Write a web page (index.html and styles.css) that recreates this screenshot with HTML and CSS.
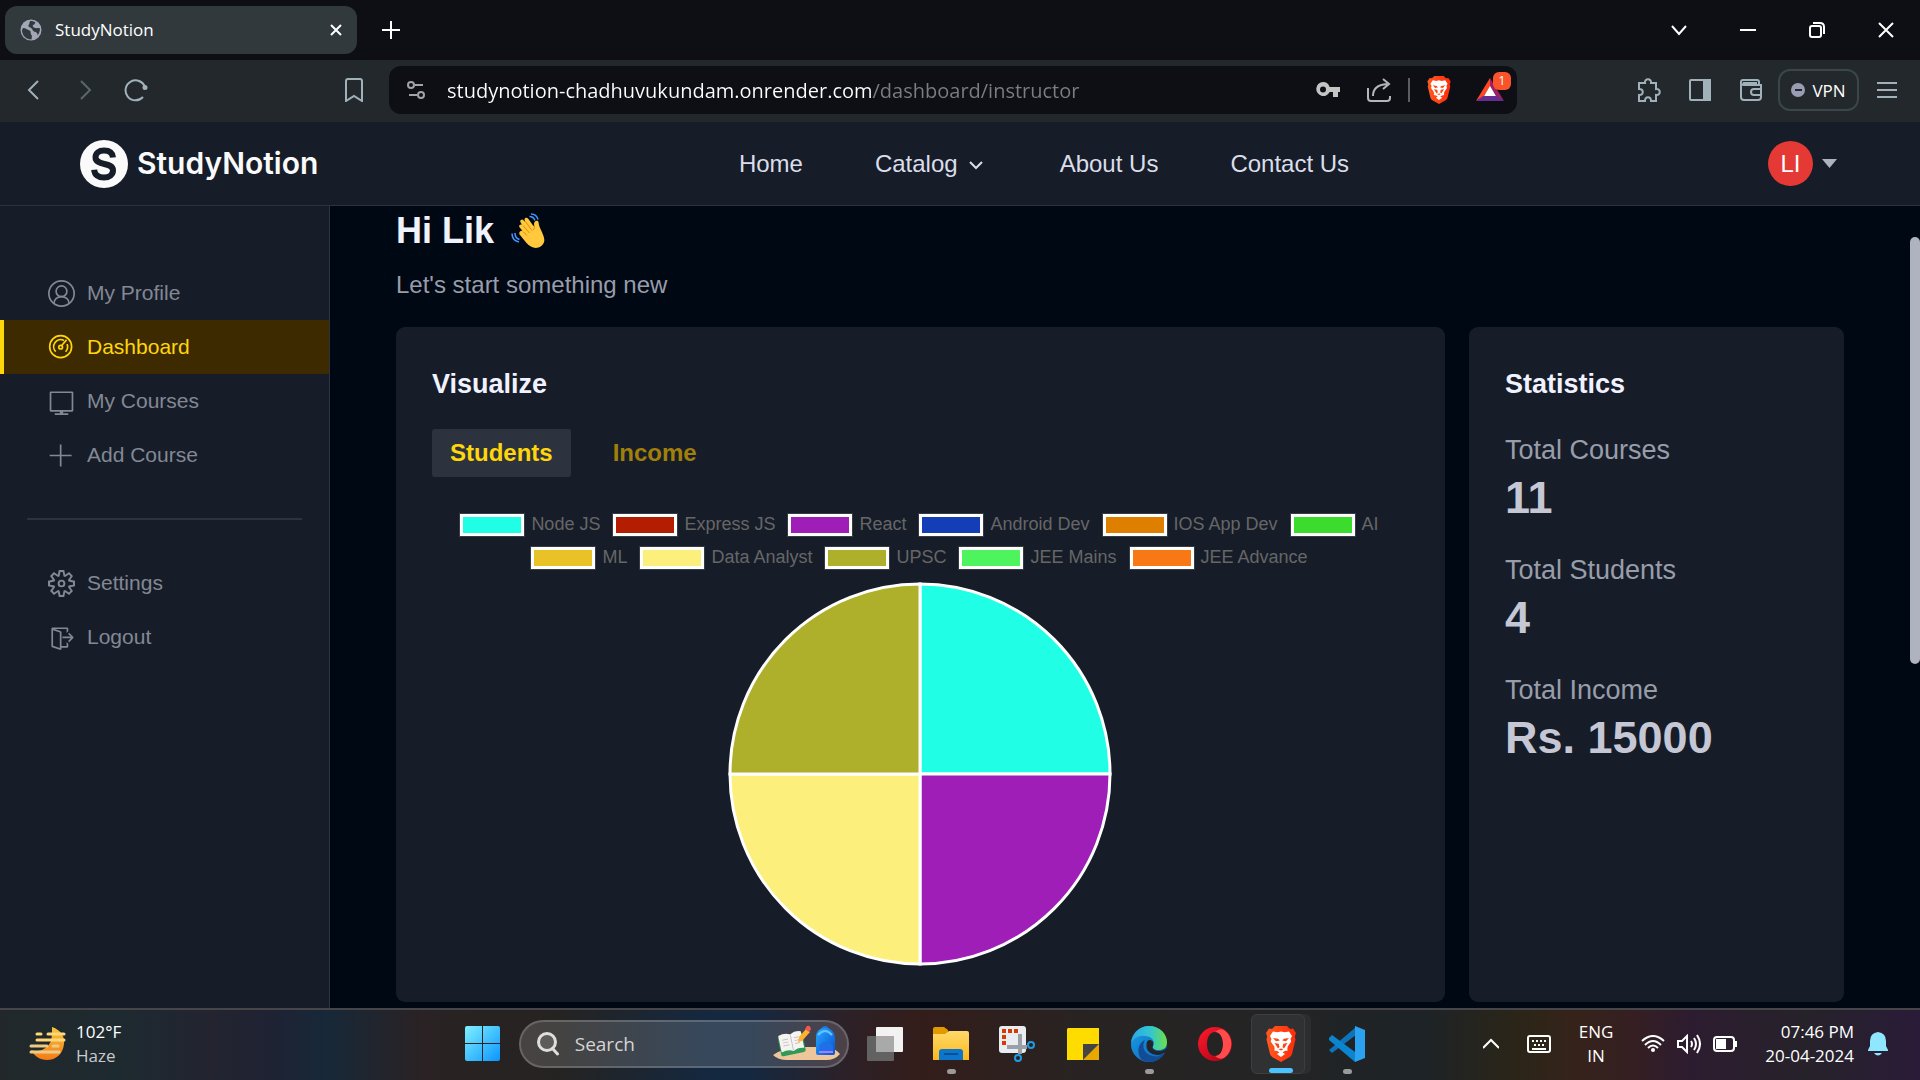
FILE: index.html
```html
<!DOCTYPE html>
<html lang="en">
<head>
<meta charset="utf-8">
<title>StudyNotion</title>
<link rel="stylesheet" href="styles.css">
</head>
<body>
<svg class="defs" aria-hidden="true">
  <defs>
    <linearGradient id="brave" x1="0" x2="1" y1="0" y2="0"><stop offset="0" stop-color="#ff5a1f"/><stop offset="1" stop-color="#ff2b0a"/></linearGradient>
    <linearGradient id="win" x1="0" y1="0" x2="1" y2="1"><stop offset="0" stop-color="#7ff0ff"/><stop offset="1" stop-color="#0a95ff"/></linearGradient>
    <linearGradient id="sun" x1="0" y1="0" x2="0" y2="1"><stop offset="0" stop-color="#f5c542"/><stop offset="1" stop-color="#f47b16"/></linearGradient>
    <linearGradient id="folder" x1="0" y1="0" x2="0" y2="1"><stop offset="0" stop-color="#ffd96b"/><stop offset="1" stop-color="#fcb91c"/></linearGradient>
    <linearGradient id="edgeTop" x1="0" y1="0" x2="1" y2="0"><stop offset="0" stop-color="#2ba6e8"/><stop offset=".55" stop-color="#34c6cf"/><stop offset="1" stop-color="#6be046"/></linearGradient>
    <linearGradient id="edgeBody" x1="0" y1="0" x2="1" y2="1"><stop offset="0" stop-color="#1b9de2"/><stop offset="1" stop-color="#0b62bd"/></linearGradient>
    <linearGradient id="opera" x1="0" y1="0" x2="1" y2="1"><stop offset="0" stop-color="#ff1b2d"/><stop offset="1" stop-color="#a70014"/></linearGradient>
    <linearGradient id="bag" x1="0" y1="0" x2="1" y2="1"><stop offset="0" stop-color="#28a8ff"/><stop offset="1" stop-color="#0a50d0"/></linearGradient>
    <symbol id="lion" viewBox="0 0 30 36">
      <path fill="url(#brave)" d="M9 0h12l3 3 3-.5 3 4.500-1.200 3.500.7 3-3.500 14.500q-.6 2-2.500 3.300L15 36l-8.500-4.700Q4.600 30 4 28L.5 13.500l.7-3L0 7l3-4.500L6 3z"/>
      <path fill="#fff" d="M15 5.500l3.500.8 4.500-.8 3 4.500-1.500 3 .8 2.500-3.600 5-.4 2.500 .5 1.500-3 .5-2.200 1.200 2.400 1.900L15 31l-4-2.900 2.400-1.900-2.200-1.200-3-.5.5-1.500-.4-2.500-3.600-5 .8-2.500L4 10l3-4.500 4.500.8z"/>
      <path fill="#fb4616" d="M7 12l5 .8 1.800 1.700-3.800.8zM23 12l-5 .8-1.800 1.700 3.800.8zM8.500 17l4.200.7.8 3.300-1.500 1.600zM21.500 17l-4.200.7-.8 3.300 1.500 1.600zM12.500 23.300l2.500-.8 2.500.8-2.500 1.200z"/>
    </symbol>
  </defs>
</svg>

<header class="browser">
  <div class="tabs">
    <div class="tab">
      <svg class="tab-icon" viewBox="0 0 22 22"><circle cx="11" cy="11" r="10.500" fill="#a4a6b5"/><path fill="#31393d" d="M3 9c3 0 4 1.500 6.500 2.500 2 .8.500 3 2 4.500 1 1 0 3 0 4.500C6 20.500 2 16.500 2 11zM10 2c2 0 4 .4 5.500 1.500-1 1-.5 2-2.500 2.500-1 1 .5 2.500 2 3 2 .5 3-.5 5 .5 0 3-1 5-2.500 7C18 14 16 13 14 12.500c-2-1-1-2.500-3-3.500C9 8 7.500 7 9 5.500z"/></svg>
      <span class="tab-title">StudyNotion</span>
      <button class="tab-close" aria-label="Close tab"><svg width="12" height="12" viewBox="0 0 12 12"><path d="M1 1l10 10M11 1L1 11" stroke="#fff" stroke-width="2" fill="none"/></svg></button>
    </div>
    <button class="new-tab" aria-label="New tab"><svg width="18" height="18" viewBox="0 0 18 18"><path d="M9 0v18M0 9h18" stroke="#fff" stroke-width="2"/></svg></button>
    <div class="window-buttons">
      <button aria-label="Search tabs"><svg width="16" height="16" viewBox="0 0 16 16"><path d="M1 4l7 8 7-8" stroke="#fff" stroke-width="2" fill="none"/></svg></button>
      <button aria-label="Minimize"><svg width="16" height="16" viewBox="0 0 16 16"><path d="M0 8h16" stroke="#fff" stroke-width="2"/></svg></button>
      <button aria-label="Restore"><svg width="16" height="16" viewBox="0 0 16 16"><g stroke="#fff" stroke-width="2" fill="none"><rect x="1" y="4" width="11" height="11" rx="2"/><path d="M4 1h7q4 0 4 4v7"/></g></svg></button>
      <button aria-label="Close"><svg width="16" height="16" viewBox="0 0 16 16"><path d="M1 1l14 14M15 1L1 15" stroke="#fff" stroke-width="2"/></svg></button>
    </div>
  </div>
  <div class="toolbar">
    <div class="toolbar-left">
      <button aria-label="Back"><svg width="24" height="24" viewBox="0 0 24 24"><path d="M16 3l-9 9 9 9"/></svg></button>
      <button class="dim" aria-label="Forward"><svg width="24" height="24" viewBox="0 0 24 24"><path d="M8 3l9 9-9 9"/></svg></button>
      <button aria-label="Reload"><svg width="24" height="24" viewBox="0 0 24 24"><path d="M21 9A10 10 0 1 0 19 19"/><circle cx="21" cy="9.500" r="2.500" fill="#a0b1ba" stroke="none"/></svg></button>
      <button class="bookmark" aria-label="Bookmark"><svg width="24" height="24" viewBox="0 0 24 24"><path d="M6 1h12q2 0 2 2v20l-8-5-8 5V3q0-2 2-2z"/></svg></button>
    </div>
    <div class="address">
      <button class="site-info" aria-label="Site information"><svg width="20" height="20" viewBox="0 0 20 20" fill="none" stroke="#a0a3a8" stroke-width="2"><circle cx="5" cy="5" r="3"/><path d="M9 5h8M3 15h8"/><circle cx="15" cy="15" r="3"/></svg></button>
      <input class="url" type="text" aria-label="Address" value="studynotion-chadhuvukundam.onrender.com/dashboard/instructor">
      <button aria-label="Passwords"><svg width="24" height="16" viewBox="0 0 24 16"><path fill="#c4c4c4" fill-rule="evenodd" d="M7 0a7 7 0 0 1 6.600 5H24v5h-2v5h-5v-5h-3.400A7 7 0 1 1 7 0zm0 4.500a3 3 0 1 0 0 6 3 3 0 0 0 0-6z"/></svg></button>
      <button aria-label="Share"><svg width="24" height="24" viewBox="0 0 24 24" fill="none" stroke="#b4b6b8" stroke-width="2"><path d="M1 10v10q0 3 3 3h16q3 0 3-3v-2M6 18q0-11 14-12M16 1l6 5-6 5"/></svg></button>
      <span class="address-divider"></span>
      <button aria-label="Brave Shields"><svg width="24" height="28"><use href="#lion"/></svg></button>
      <button class="rewards" aria-label="Brave Rewards"><svg width="28" height="24" viewBox="0 0 28 24"><path fill="#ff4724" d="M14 0v9L7 19 0 23z"/><path fill="#9e1f63" d="M14 0l14 23-7-4-7-10z"/><path fill="#662d91" d="M0 23l7-5h14l7 5z"/><path fill="#fff" d="M14 8l6 10H8z"/></svg><span class="badge">1</span></button>
    </div>
    <div class="toolbar-right">
      <button aria-label="Extensions"><svg width="24" height="24" viewBox="0 0 24 24"><path d="M2 5h6c-1-5 7-5 6 0h5v6c5-1 5 7 0 6v6h-5c0-5-6-5-6 0H2v-6c5 0 5-6 0-6z"/></svg></button>
      <button aria-label="Sidebar"><svg width="24" height="24" viewBox="0 0 24 24"><rect x="2" y="2" width="20" height="20" rx="1"/><path fill="#a0b1ba" d="M16 2h6v20h-6z"/></svg></button>
      <button aria-label="Wallet"><svg width="24" height="24" viewBox="0 0 24 24"><path d="M20 7V4q0-2-2-2H4Q2 2 2 4v15q0 3 3 3h14q3 0 3-3V7H5Q2 7 2 4M22 11h-7q-3 0-3 3t3 3h7M4 5h14"/></svg></button>
      <button class="vpn"><svg width="15" height="15" viewBox="0 0 15 15"><circle cx="7" cy="7" r="7" fill="#9a9cb4" stroke="none"/><path d="M4 7h7" stroke="#22282b"/></svg>VPN</button>
      <button aria-label="Menu"><svg width="20" height="16" viewBox="0 0 20 16"><path d="M0 1h20M0 8h20M0 15h20"/></svg></button>
    </div>
  </div>
</header>

<div class="page">
  <nav class="site-nav">
    <a class="logo" href="#"><svg width="48" height="48" viewBox="0 0 48 48"><circle cx="24" cy="24" r="24" fill="#fafafa"/><path d="M33 17.500C32.500 12.500 29 10.500 24 10.500c-5 0-8.500 2.500-8.500 6.800 0 9.200 17.500 4.200 17.500 13 0 4.500-3.800 7.200-9 7.200-5.500 0-9.500-2.700-9.800-7.800" fill="none" stroke="#161d29" stroke-width="6"/></svg><span>StudyNotion</span></a>
    <ul class="nav-links">
      <li><a href="#">Home</a></li>
      <li><a href="#">Catalog <svg width="24" height="24" viewBox="0 0 24 24"><path d="M6 10l6 6 6-6" fill="none" stroke="#dbddea" stroke-width="2"/></svg></a></li>
      <li><a href="#">About Us</a></li>
      <li><a href="#">Contact Us</a></li>
    </ul>
    <button class="account"><span class="avatar">LI</span><svg width="21" height="21" viewBox="0 0 21 21"><path fill="#afb2bf" d="M3 6h15l-7.500 9z"/></svg></button>
  </nav>

  <div class="shell">
    <aside class="sidebar">
      <ul>
        <li><a href="#"><svg viewBox="0 0 16 16"><g fill="none" stroke="currentColor"><circle cx="8" cy="8" r="7.500"/><circle cx="8" cy="6.700" r="3.200"/><path d="M3.500 14c0-5.500 9-5.500 9 0"/></g></svg>My Profile</a></li>
        <li><a class="active" href="#"><svg viewBox="0 0 16 16"><g fill="none" stroke="currentColor"><circle cx="7.500" cy="7.500" r="6.500"/><path d="M4.600 10.500A4.200 4.200 0 0 1 9.500 3.800M11.300 6a4.200 4.200 0 0 1-.9 4.500M8 7l3-3.500"/><circle cx="7.500" cy="7.800" r="1.100"/></g></svg>Dashboard</a></li>
        <li><a href="#"><svg viewBox="0 0 16 16"><path fill="currentColor" fill-rule="evenodd" d="M14.500 2h-13l-.5.500v11l.5.500H7v1H4v1h8v-1H9v-1h5.500l.5-.5v-11zM14 13H2V3h12z"/></svg>My Courses</a></li>
        <li><a href="#"><svg viewBox="0 0 16 16"><path fill="currentColor" d="M14 7v1H8v6H7V8H1V7h6V1h1v6z" transform="translate(0 .5)"/></svg>Add Course</a></li>
      </ul>
      <hr>
      <ul>
        <li><a href="#"><svg viewBox="0 0 24 24"><path fill="currentColor" fill-rule="evenodd" d="M19.850 8.750l4.150.83v4.840l-4.150.83 2.350 3.520-3.430 3.430-3.520-2.350-.83 4.150H9.580l-.83-4.150-3.520 2.350-3.430-3.430 2.350-3.520L0 14.420V9.580l4.150-.83L1.800 5.230 5.230 1.800l3.520 2.350L9.580 0h4.840l.83 4.150 3.520-2.350 3.430 3.430-2.350 3.520zm-1.570 5.070l4-.81v-2l-4-.81-.54-1.300 2.290-3.430-1.430-1.430-3.430 2.290-1.300-.54-.81-4h-2l-.81 4-1.300.54-3.430-2.290-1.430 1.430L6.380 8.900l-.54 1.300-4 .81v2l4 .81.54 1.300-2.290 3.430 1.430 1.430 3.430-2.290 1.300.54.81 4h2l.81-4 1.300-.54 3.430 2.290 1.430-1.430-2.290-3.430.54-1.300zM12 8.570a3.430 3.430 0 1 1 0 6.860 3.430 3.430 0 0 1 0-6.860zm0 1.720a1.710 1.710 0 1 0 0 3.420 1.710 1.710 0 0 0 0-3.420z"/></svg>Settings</a></li>
        <li><a href="#"><svg viewBox="0 0 16 16"><path fill="currentColor" fill-rule="evenodd" d="M11.020 3.770v1.560l1-.99V2.500l-.5-.5h-9l-.51.500v.493L2 3v10.290l.36.460 5 1.720L8 15v-1h3.520l.5-.5v-1.810l-1-1V13H8V4.710l-.33-.46L4.036 3h6.984v.77zM7 14.280l-4-1.340V3.720l4 1.340v9.220zm6.520-5.800H8.550v-1h4.930l-1.600-1.600.71-.7 2.470 2.460v.71l-2.490 2.480-.7-.7 1.650-1.650z"/></svg>Logout</a></li>
      </ul>
    </aside>

    <main>
      <h1>Hi Lik <svg width="36" height="36" viewBox="0 0 36 36"><path fill="#ffc83d" d="M9 18.500c1.500-1.500 3 0 3 0l-3.500-4.200c-1.300-2 1.200-3.700 2.600-2.300L9.500 9.200c-1-2 1.400-3.700 3-2L14.200 9 13.600 7c-.5-2.400 2.400-3.200 3.600-1.200L22.500 13l.8-.3c-.6-2-.1-4.700 2-5 2.500-.4 2.300 2.200 2.800 4.500 1.300 5.800 9.800 15.300 1.900 21-5 3.500-10.500 1.200-14.500-3.200L9 22c-1-1-1-2.500 0-3.500z"/><path fill="none" stroke="#e08f00" stroke-width="1" d="M12 18.500l4 4M12 12.500l6.500 7.500M14.500 8.500l6.500 9M23.300 12.700c.2 2-.1 3.300-1.300 4.500"/><path fill="none" stroke="#4497fb" stroke-width="1.500" d="M18.500 3.500q4 0 5.500 4M20 1q5.500 0 7 5.500M4 20q0 5 4.500 6.500M1 20.500q0 7 7 8.500"/></svg></h1>
      <p class="subtitle">Let's start something new</p>
      <div class="cards">
        <section class="card">
          <h2>Visualize</h2>
          <div class="chart-tabs">
            <button class="selected">Students</button>
            <button>Income</button>
          </div>
          <div class="chart">
            <ul class="legend">
              <li><i class="c-node"></i><span>Node JS</span></li>
              <li><i class="c-express"></i><span>Express JS</span></li>
              <li><i class="c-react"></i><span>React</span></li>
              <li><i class="c-android"></i><span>Android Dev</span></li>
              <li><i class="c-ios"></i><span>IOS App Dev</span></li>
              <li><i class="c-ai"></i><span>AI</span></li>
              <li><i class="c-ml"></i><span>ML</span></li>
              <li><i class="c-data"></i><span>Data Analyst</span></li>
              <li><i class="c-upsc"></i><span>UPSC</span></li>
              <li><i class="c-mains"></i><span>JEE Mains</span></li>
              <li><i class="c-advance"></i><span>JEE Advance</span></li>
            </ul>
            <svg class="pie" viewBox="0 0 384 384" role="img" aria-label="Students per course">
              <g stroke="#fff" stroke-width="3">
                <path fill="#20ffe5" d="M192 192V2a190 190 0 0 1 190 190z"/>
                <path fill="#9f1eb7" d="M192 192h190a190 190 0 0 1-190 190z"/>
                <path fill="#fcef7b" d="M192 192v190A190 190 0 0 1 2 192z"/>
                <path fill="#aeaf2b" d="M192 192H2A190 190 0 0 1 192 2z"/>
              </g>
            </svg>
          </div>
        </section>
        <section class="card">
          <h2>Statistics</h2>
          <dl class="stats">
            <div><dt>Total Courses</dt><dd>11</dd></div>
            <div><dt>Total Students</dt><dd>4</dd></div>
            <div><dt>Total Income</dt><dd>Rs. 15000</dd></div>
          </dl>
        </section>
      </div>
    </main>
    <div class="scroll-track"><div class="scroll-thumb"></div></div>
  </div>
</div>

<footer class="taskbar">
  <button class="weather">
    <svg width="38" height="36" viewBox="0 0 38 36"><path fill="url(#sun)" d="M24 1C33 4 37 11 36 18 35 28 28 34 19 34 12 34 6 30 3 24c9 3 17-2 20-9 1-5 1-9 1-14z"/><g stroke-width="3" stroke-linecap="round" stroke="#ffd875"><path d="M9 8h4M20 8h16M9 14h27"/><path stroke="#eccb85" d="M3 20h16M25 20h5M3 26h28"/></g></svg>
    <span>102°F<br><span class="muted">Haze</span></span>
  </button>
  <div class="apps">
    <button aria-label="Start"><svg width="36" height="36" viewBox="0 0 36 36"><path fill="url(#win)" d="M2 0h15v17H0V2q0-2 2-2zM18 0h15q2 0 2 2v15H18zM0 18h17v17H2q-2 0-2-2zM18 18h17v15q0 2-2 2H18z"/></svg></button>
    <label class="search">
      <svg width="22" height="24" viewBox="0 0 22 24"><circle cx="10" cy="10" r="8.500" fill="#ffffff22" stroke="#dedede" stroke-width="3"/><path d="M15.500 16.500l5 5.500" stroke="#dedede" stroke-width="3" stroke-linecap="round"/></svg>
      <input type="search" placeholder="Search" aria-label="Search">
      <svg width="68" height="38" viewBox="0 0 68 38"><path fill="#edc79a" d="M0 30q10-7 25-8h30q8 2 12 7-5 6-14 6H14Q5 35 0 30z"/><g transform="rotate(-12 20 18)"><rect x="6" y="9" width="25" height="20" rx="2" fill="#2f9a58"/><path fill="#f7f4ef" d="M7 8q7-2 12 1 5-3 11-1v17q-6-2-11 1-5-3-12-1z"/><path d="M19 10v15M10 13h6M10 16h6M10 19h6M22 13h5M22 16h5M22 19h5" stroke="#c4c0cf"/></g><path fill="#ffb02e" d="M25 17l1-5 7-8 4 3-8 9z"/><path fill="#f8574f" d="M32 4l2-3q3-1 4 3l-2 3z"/><path d="M48 5q4-6 8 0" fill="none" stroke="#2274e0" stroke-width="2"/><path fill="url(#bag)" d="M43 13q0-10 9-10t10 10v15q0 2-2 2H45q-2 0-2-2z"/><path d="M45 10q7-8 14 0" fill="none" stroke="#5cc8ff" stroke-width="2"/><path fill="#1e6fe8" d="M46 24q0-7 7-7t7 7v3H46z"/><path d="M46 27h14" stroke="#a87cff" stroke-width="2"/></svg>
    </label>
    <button aria-label="Task view"><svg width="36" height="36" viewBox="0 0 36 36"><rect x="9" y="1" width="27" height="25" rx="1" fill="#f2f2f2"/><rect y="10" width="27" height="25" rx="1" fill="#626262"/><path fill="#a9a9a9" d="M9 10h18v16H9z"/></svg></button>
    <button class="running" aria-label="File Explorer"><svg width="36" height="36" viewBox="0 0 36 36"><path fill="#e09a00" d="M0 3q0-2 2-2h9l4 3v5H0z"/><path fill="url(#folder)" d="M0 8h12l4-3h18q2 0 2 2v27H0z"/><path fill="#0b76cc" d="M6 34V26q0-3 3-3h18q3 0 3 3v8z"/><path d="M11 28h14" stroke="#0a4f91" stroke-width="2"/></svg></button>
    <button aria-label="Snipping Tool"><svg width="36" height="36" viewBox="0 0 36 36"><rect width="27" height="27" rx="3" fill="#e9edf2"/><path fill="#d83b01" d="M3 3h4v4H3zM9 3h4v4H9zM15 3h4v4h-4zM3 9h4v4H3zM3 15h4v4H3z"/><path fill="none" stroke="#9aa0a6" stroke-width="4" d="M21 8v20M8 21h20"/><g fill="none" stroke="#1f9be6" stroke-width="2"><circle cx="32" cy="19" r="3"/><circle cx="19" cy="32" r="3"/></g></svg></button>
    <button aria-label="Sticky Notes"><svg width="32" height="32" viewBox="0 0 32 32"><path fill="#ffdc00" d="M1 0h31v32H0V1z"/><path fill="#e9a800" d="M16 32h16V16z"/><path fill="#444" d="M16 16h16L16 32z"/></svg></button>
    <button class="running" aria-label="Edge"><svg width="36" height="36" viewBox="0 0 36 36"><circle cx="18" cy="18" r="18" fill="url(#edgeBody)"/><path fill="url(#edgeTop)" d="M0 17C1 7 9 0 18 0c11 0 18 8 18 16 0 6-4 8-8 8-5 0-7-2-6-4 3-6-3-10-8-10C8 9 3 12 0 17z"/><path fill="#124c93" d="M14 14c-4 7 0 15 8 16 4 1 8 0 11-3-4 9-14 11-22 7C5 27 7 17 14 14z"/><path fill="#22252a" d="M18 14c5 0 5 4 3.500 7 0 2 2.500 4 7 4 3 0 5-1 8-4v5q-2 1-4 1c-2 2-5 2-7 2-6-1-10-4-10-9 0-3 0-5 2.500-6z"/></svg></button>
    <button aria-label="Opera"><svg width="36" height="36" viewBox="0 0 36 36"><path fill="url(#opera)" fill-rule="evenodd" d="M18 1a17 17 0 1 1 0 34 17 17 0 0 1 0-34zm0 5c-5 0-8 5-8 12s3 12 8 12 8-5 8-12-3-12-8-12z"/><path fill="#ff4b4b" d="M18 30c5 0 8-5 8-12S23 6 18 6q4-4 9-2a17 17 0 0 1 0 28q-5 2-9-2z"/></svg></button>
    <button class="running current" aria-label="Brave"><svg width="30" height="36"><use href="#lion"/></svg></button>
    <button class="running" aria-label="Visual Studio Code"><svg width="36" height="36" viewBox="0 0 36 36"><path fill="#0e73b9" d="M0 24l3 3 24-18V1L0 24z"/><path fill="#0b85d0" d="M3 9l-3 3 0 2 26 22V26z"/><path fill="#2aa2f0" d="M26 0l10 4v28l-10 4z"/></svg></button>
  </div>
  <div class="tray">
    <button class="tray-more" aria-label="Show hidden icons"><svg width="16" height="16" viewBox="0 0 16 16"><path d="M0 12l8-8 8 8"/></svg></button>
    <button class="tray-keyboard" aria-label="Touch keyboard"><svg width="24" height="18" viewBox="0 0 24 18"><rect x="1" y="1" width="22" height="16" rx="2"/><path d="M5 6h14M7 10h10" stroke-dasharray="2 2"/><path d="M5 14h14"/></svg></button>
    <button class="tray-language">ENG<br>IN</button>
    <button class="tray-status" aria-label="Network, volume and battery">
      <svg width="24" height="18" viewBox="0 0 24 18"><path d="M1 6q11-10 22 0M4 10q8-8 16 0M7 13q5-5 10 0"/><circle cx="12" cy="15" r="2" fill="#fff" stroke="none"/></svg>
      <svg width="24" height="20" viewBox="0 0 24 20"><path d="M1 7h4l5-5v16l-5-5H1zM14 7q2 3 0 6M17 4q4 6 0 12M20 1q6 9 0 18"/></svg>
      <svg width="24" height="18" viewBox="0 0 24 18"><rect x="1" y="2" width="20" height="14" rx="3"/><path fill="#fff" stroke="none" d="M3 4h10v10H3zM22 6h2v6h-2z"/></svg>
    </button>
    <button class="tray-clock">07:46 PM<br>20-04-2024</button>
    <button aria-label="Notifications"><svg width="20" height="24" viewBox="0 0 20 24"><path fill="#8fe6ff" stroke="none" d="M10 0q8 1 8 9v5l2 4v1H0v-1l2-4V9q0-8 8-9zM6 21h8q-4 5-8 0z"/></svg></button>
  </div>
</footer>
</body>
</html>
```

FILE: styles.css
```css
* { box-sizing: border-box; }

body {
  margin: 0;
  height: 100vh;
  display: flex;
  flex-direction: column;
  overflow: hidden;
  background: #000814;
  font-family: "Liberation Sans", Arial, sans-serif;
}

button {
  margin: 0;
  padding: 0;
  border: 0;
  background: none;
  color: inherit;
  font: inherit;
  display: flex;
  align-items: center;
  justify-content: center;
}

input { border: 0; padding: 0; background: none; font: inherit; outline: 0; min-width: 0; }
ul, dl, dd, h1, h2, p { margin: 0; padding: 0; }
ul { list-style: none; }
a { color: inherit; text-decoration: none; }
svg { flex: none; }
.defs { position: absolute; width: 0; height: 0; }

/* Browser window */
.browser { flex: none; font-family: "Open Sans", "Noto Sans", sans-serif; color: #fff; }
.tabs { display: flex; align-items: center; height: 60px; padding-left: 5px; background: #0e0f14; }
.tab { display: flex; align-items: center; width: 352px; height: 48px; padding: 0 15px; border-radius: 12px; background: #31393d; font-size: 17px; }
.tab-icon { width: 22px; height: 26px; margin-right: 13px; }
.tab-title { padding-bottom: 2px; }
.tab-close { margin-left: auto; }
.new-tab { width: 50px; height: 48px; margin-left: 9px; }
.window-buttons { display: flex; margin-left: auto; }
.window-buttons button { width: 69px; height: 60px; }

.toolbar { display: flex; height: 62px; padding: 6px 8px 8px; background: #22282b; }
.toolbar button { width: 51px; height: 48px; }
.toolbar-left, .toolbar-right { display: flex; align-items: center; flex: none; }
.toolbar-left { width: 381px; padding-right: 10px; }
.toolbar-left svg, .toolbar-right svg { fill: none; stroke: #a0b1ba; stroke-width: 2; }
.toolbar-left .dim { opacity: .45; }
.toolbar-left .bookmark { margin-left: auto; }
.address { flex: 1; display: flex; align-items: center; padding: 0 2px 0 12px; border-radius: 12px; background: #0e0f14; }
.address .site-info { width: 30px; margin-right: 16px; }
.url {
  flex: 1;
  height: 48px;
  font-size: 20px;
  color: transparent;
  background: linear-gradient(90deg, #fff 425px, #7c7d80 425px);
  background-clip: text;
  -webkit-background-clip: text;
}
.address-divider { width: 2px; height: 24px; margin: 0 3px 0 4px; background: #5b5d62; }
.rewards { position: relative; }
.badge { position: absolute; top: 6px; right: 4px; width: 18px; height: 18px; border-radius: 6px; background: #fb542b; font-size: 12px; line-height: 18px; }
.toolbar-right { margin-left: 106px; }
.toolbar-right .vpn { width: 81px; height: 42px; margin: 0 2px; gap: 6px; border: 2px solid #3a4649; border-radius: 12px; font-size: 17px; }

/* Site header */
.page { flex: 1; min-height: 0; display: flex; flex-direction: column; }
.site-nav { flex: none; display: flex; align-items: center; justify-content: space-between; height: 84px; padding: 0 80px; background: #161d29; border-bottom: 1px solid #2c333f; color: #dbddea; font-size: 24px; }
.logo { display: flex; align-items: center; gap: 9px; color: #fafafa; font-family: Inter, sans-serif; font-size: 30px; font-weight: 600; }
.logo span { min-width: 183px; padding-bottom: 2px; }
.nav-links { display: flex; gap: 72px; }
.nav-links a { display: flex; align-items: center; gap: 6px; }
.account { gap: 6px; }
.avatar { width: 45px; height: 45px; border-radius: 50%; background: #e53935; color: #fff; line-height: 45px; }

/* Dashboard */
.shell { flex: 1; min-height: 0; display: flex; }
.sidebar { flex: none; width: 330px; padding: 60px 0; background: #161d29; border-right: 1px solid #2c333f; }
.sidebar a { display: flex; align-items: center; gap: 12px; height: 54px; padding-left: 48px; color: #838894; font-size: 21px; }
.sidebar svg { width: 27px; height: 27px; }
.sidebar .active { padding-left: 44px; border-left: 4px solid #ffd60a; background: #3d2a01; color: #ffd60a; }
.sidebar hr { height: 2px; margin: 36px 27px; border: 0; background: #2c333f; }

main { flex: 1; min-width: 0; padding: 1px 66px 6px; display: flex; flex-direction: column; }
h1 { display: flex; align-items: center; gap: 17px; color: #f1f2ff; font-size: 36px; line-height: 48px; }
.subtitle { margin: 12px 0 24px; color: #999daa; font-size: 24px; line-height: 36px; }
.cards { flex: 1; min-height: 0; display: flex; gap: 24px; }
.card { width: 375px; padding: 36px; border-radius: 9px; background: #161d29; }
.card:first-child { flex: 1; width: auto; }
h2 { color: #f1f2ff; font-size: 27px; line-height: 42px; }
.chart-tabs { display: flex; gap: 24px; margin-top: 24px; font-size: 24px; font-weight: bold; }
.chart-tabs button { height: 48px; padding: 0 18px; border-radius: 3px; color: #a0800a; }
.chart-tabs .selected { background: #2c333f; color: #ffd60a; }

.chart { margin-top: 36px; padding-right: 2px; }
.legend { display: flex; flex-wrap: wrap; justify-content: center; gap: 9px 13px; color: #666; font-size: 18px; line-height: 22px; }
.legend li { display: flex; align-items: center; gap: 7px; height: 24px; }
.legend span { padding-bottom: 2px; }
.legend i { width: 64px; height: 22px; border: 3px solid #fff; outline: 1px solid #ffffff22; }
.c-node { background: #20ffe5; }
.c-express { background: #b31e03; }
.c-react { background: #9f1eb7; }
.c-android { background: #143db8; }
.c-ios { background: #df7f00; }
.c-ai { background: #3bdc2e; }
.c-ml { background: #e9c227; }
.c-data { background: #fcef7b; }
.c-upsc { background: #aeaf2b; }
.c-mains { background: #4df45d; }
.c-advance { background: #f97816; }
.pie { display: block; width: 384px; margin: 12px auto 0; }

.stats { display: flex; flex-direction: column; gap: 24px; margin-top: 24px; }
.stats dt { color: #999daa; font-size: 27px; line-height: 42px; }
.stats dd { color: #c5c7d4; font-size: 45px; font-weight: bold; line-height: 54px; }

.scroll-track { width: 10px; padding-top: 31px; }
.scroll-thumb { height: 427px; border-radius: 5px; background: #afb2bf; }

/* Taskbar */
.taskbar {
  flex: none;
  display: grid;
  grid-template-columns: 5fr auto 6fr;
  height: 72px;
  padding-bottom: 2px;
  border-top: 2px solid #45454a;
  background: linear-gradient(90deg, #22282a 0, #1d2a30 6%, #232430 11%, #1f2233 14%, #172838 17%, #2a2224 22%, #252321 29%, #142840 37%, #142840 39%, #2c2128 44%, #331d1a 48%, #282322 56%, #242424 65%, #1d2327 74%, #2b2518 79%, #35231a 82%, #351f22 85%, #2d1c30 88%, #26222a 94%, #2a1b38 100%);
  color: #fff;
  font-family: "Open Sans", "Noto Sans", sans-serif;
  font-size: 17px;
  line-height: 24px;
}
.weather { justify-self: start; gap: 10px; padding-left: 28px; text-align: left; }
.weather .muted { color: #c8cacc; }
.apps { display: flex; align-items: center; gap: 6px; }
.apps button { position: relative; width: 60px; height: 60px; border-radius: 6px; }
.apps .running::after { content: ""; position: absolute; bottom: 0; left: 26px; width: 9px; height: 5px; border-radius: 3px; background: #9a9a9a; }
.apps .current { width: 54px; margin-right: 6px; padding-left: 6px; background: #303133; border: 1px solid #3d3e40; box-shadow: 6px 0 0 #2c2d2f; }
.apps .current::after { left: 17px; width: 24px; background: #4cc2ff; }
.search { display: flex; align-items: center; width: 330px; height: 48px; padding: 0 6px 0 16px; border: 2px solid #ffffff2e; border-radius: 24px; background: #ffffff26; }
.search input { flex: 1; margin-left: 16px; color: #fff; font-size: 19px; }
.search input::placeholder { color: #d4d4d4; }

.tray { display: flex; align-items: center; justify-content: flex-end; padding-right: 32px; }
.tray svg { fill: none; stroke: #fff; stroke-width: 2; }
.tray-more { margin-right: 28px; }
.tray-keyboard { margin-right: 28px; }
.tray-language { margin-right: 28px; }
.tray-status { gap: 12px; margin-right: 28px; }
.tray-clock { margin-right: 14px; text-align: right; }
```
